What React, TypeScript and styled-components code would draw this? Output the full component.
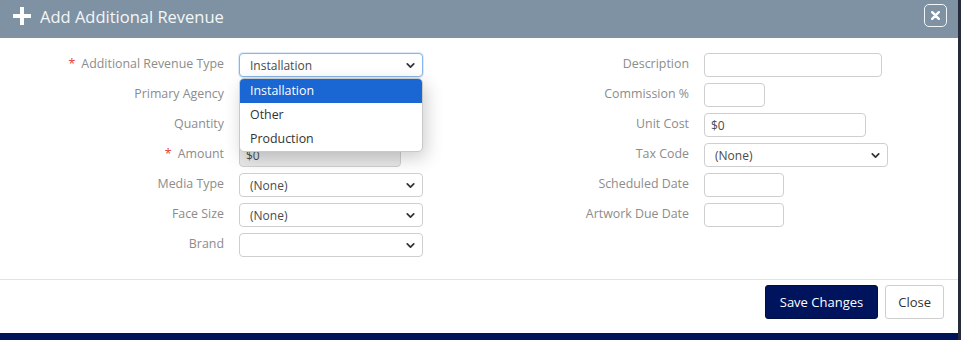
import React from "react";
import styled, { createGlobalStyle } from "styled-components";
import { ChevronDown } from "lucide-react";

const GlobalStyle = createGlobalStyle`
  html, body {
    margin: 0;
    padding: 0;
    background: #262b3b;
    font-family: "Open Sans", "Noto Sans", sans-serif;
  }
  * { box-sizing: border-box; }
`;

type Field =
  | { label: string; required?: boolean; kind: "select"; value: string; width: number; open?: boolean }
  | { label: string; required?: boolean; kind: "input"; value: string; width: number; disabled?: boolean };

const leftFields: Field[] = [
  { label: "Additional Revenue Type", required: true, kind: "select", value: "Installation", width: 184, open: true },
  { label: "Primary Agency", kind: "input", value: "", width: 184 },
  { label: "Quantity", kind: "input", value: "", width: 162 },
  { label: "Amount", required: true, kind: "input", value: "$0", width: 162, disabled: true },
  { label: "Media Type", kind: "select", value: "(None)", width: 184 },
  { label: "Face Size", kind: "select", value: "(None)", width: 184 },
  { label: "Brand", kind: "select", value: "", width: 184 },
];

const rightFields: Field[] = [
  { label: "Description", kind: "input", value: "", width: 178 },
  { label: "Commission %", kind: "input", value: "", width: 61 },
  { label: "Unit Cost", kind: "input", value: "$0", width: 162 },
  { label: "Tax Code", kind: "select", value: "(None)", width: 184 },
  { label: "Scheduled Date", kind: "input", value: "", width: 80 },
  { label: "Artwork Due Date", kind: "input", value: "", width: 80 },
];

const options = ["Installation", "Other", "Production"];

function FieldControl({ field }: { field: Field }) {
  if (field.kind === "select") {
    return (
      <SelectWrap $width={field.width}>
        <SelectBox $focused={!!field.open}>
          <span>{field.value}</span>
          <ChevronDown size={13} strokeWidth={3.2} color="#333" />
        </SelectBox>
        {field.open && (
          <Menu>
            {options.map((o, i) => (
              <MenuItem key={o} $active={i === 0}>
                {o}
              </MenuItem>
            ))}
          </Menu>
        )}
      </SelectWrap>
    );
  }
  return (
    <TextBox $width={field.width} $disabled={!!field.disabled}>
      {field.value}
    </TextBox>
  );
}

function FormColumn({ fields, labelWidth, $front }: { fields: Field[]; labelWidth: number; $front?: boolean }) {
  return (
    <Column $labelWidth={labelWidth} $front={$front}>
      {fields.map((f) => (
        <React.Fragment key={f.label}>
          <Label>
            {f.required && <Star>*</Star>}
            {f.label}
          </Label>
          <Cell>
            <FieldControl field={f} />
          </Cell>
        </React.Fragment>
      ))}
    </Column>
  );
}

export default function App() {
  return (
    <>
      <GlobalStyle />
      <Modal>
        <Header>
          <Title>
            <PlusIcon viewBox="0 0 18 18">
              <path d="M7 0h4v7h7v4h-7v7H7v-7H0V7h7z" fill="#fff" />
            </PlusIcon>
            Add Additional Revenue
          </Title>
          <CloseX>
            <svg width="9" height="9" viewBox="0 0 9 9">
              <path d="M1.2 1.2l6.6 6.6M7.8 1.2L1.2 7.8" stroke="#fff" strokeWidth="2.4" strokeLinecap="round" />
            </svg>
          </CloseX>
        </Header>
        <Body>
          <FormColumn fields={leftFields} labelWidth={224} $front />
          <FormColumn fields={rightFields} labelWidth={209} />
        </Body>
        <Footer>
          <PrimaryButton>Save Changes</PrimaryButton>
          <SecondaryButton>Close</SecondaryButton>
        </Footer>
        <BottomBar />
      </Modal>
    </>
  );
}

const Modal = styled.div`
  width: 958px;
  height: 340px;
  background: #fff;
  display: flex;
  flex-direction: column;
`;

const Header = styled.div`
  height: 38px;
  background: #7e92a3;
  display: flex;
  align-items: flex-start;
  justify-content: space-between;
  padding: 4px 11px 0 13px;
`;

const Title = styled.div`
  display: flex;
  align-items: center;
  gap: 9px;
  color: #f4f6f8;
  font-size: 16.5px;
  line-height: 26px;
`;

const PlusIcon = styled.svg`
  width: 18px;
  height: 18px;
  margin-top: -3px;
`;

const CloseX = styled.div`
  width: 23px;
  height: 23px;
  border: 1.5px solid #f2f4f6;
  border-radius: 5px;
  display: flex;
  align-items: center;
  justify-content: center;
`;

const Body = styled.div`
  display: grid;
  grid-template-columns: 480px 1fr;
  padding: 15px 0 16px;
  border-bottom: 1px solid #e3e3e3;
`;

const Column = styled.div<{ $labelWidth: number; $front?: boolean }>`
  display: grid;
  grid-template-columns: ${(p) => p.$labelWidth}px 1fr;
  grid-auto-rows: 30px;
  column-gap: 15px;
  align-content: start;
  position: relative;
  z-index: ${(p) => (p.$front ? 2 : 1)};
`;

const Label = styled.div`
  text-align: right;
  font-size: 12.4px;
  color: #8c8c8c;
  line-height: 21px;
`;

const Star = styled.span`
  color: #e53935;
  margin-right: 6px;
`;

const Cell = styled.div`
  display: flex;
  align-items: flex-start;
`;

const SelectWrap = styled.div<{ $width: number }>`
  position: relative;
  width: ${(p) => p.$width}px;
`;

const SelectBox = styled.div<{ $focused: boolean }>`
  height: 24px;
  border: 1px solid ${(p) => (p.$focused ? "#86b7e8" : "#cfcfcf")};
  box-shadow: ${(p) => (p.$focused ? "0 0 0 1px rgba(120,170,230,0.25)" : "none")};
  border-radius: 4px;
  background: #fff;
  display: flex;
  align-items: center;
  justify-content: space-between;
  padding: 1px 5px 0 10px;
  font-size: 12px;
  color: #4a4a4a;
`;

const TextBox = styled.div<{ $width: number; $disabled: boolean }>`
  width: ${(p) => p.$width}px;
  height: 24px;
  border: 1px solid #cfcfcf;
  border-radius: 4px;
  background: ${(p) => (p.$disabled ? "#e8e8e8" : "#fff")};
  display: flex;
  align-items: center;
  padding: 1px 6px 0;
  font-size: 12px;
  color: #4a4a4a;
`;

const Menu = styled.div`
  position: absolute;
  top: 25px;
  left: 0;
  right: 0;
  background: #fff;
  border: 1px solid #c9c9c9;
  border-radius: 5px;
  box-shadow: 3px 6px 18px rgba(0, 0, 0, 0.2);
  overflow: hidden;
`;

const MenuItem = styled.div<{ $active: boolean }>`
  height: 24px;
  line-height: 24px;
  padding-left: 10px;
  font-size: 12.4px;
  color: ${(p) => (p.$active ? "#fff" : "#333")};
  background: ${(p) => (p.$active ? "#1a66d2" : "transparent")};
`;

const Footer = styled.div`
  display: flex;
  justify-content: flex-end;
  gap: 7px;
  padding: 5px 14px 0 0;
  flex: 1;
`;

const PrimaryButton = styled.button`
  height: 34px;
  padding: 0 14px;
  background: #00145e;
  border: 1px solid #000d40;
  border-radius: 3px;
  color: #fff;
  font-family: inherit;
  font-size: 13px;
`;

const SecondaryButton = styled(PrimaryButton)`
  padding: 0 12px;
  background: #fff;
  border-color: #cfcfcf;
  color: #333;
`;

const BottomBar = styled.div`
  height: 7px;
  background: #00145a;
`;
